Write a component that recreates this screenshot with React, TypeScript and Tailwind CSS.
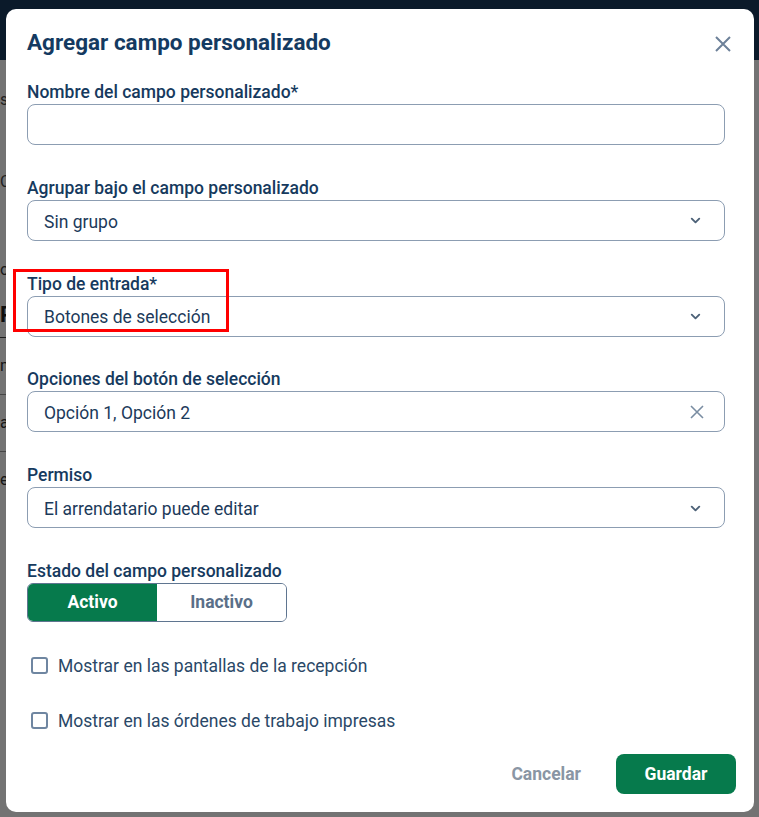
import { ChevronDown } from "lucide-react";

const font = { fontFamily: "Roboto, 'Liberation Sans', sans-serif" };

function Label({ children }: { children: React.ReactNode }) {
  return (
    <div className="h-[23px] text-[17.5px] leading-[23px] font-medium text-[#163a5e]">{children}</div>
  );
}

function SelectBox({ value }: { value: string }) {
  return (
    <div className="flex h-[41px] items-center justify-between rounded-[8px] border border-[#8c9db2] pl-[16px] pr-[21px] text-[17.5px] text-[#1c3a5a]">
      <span className="pt-[3px]">{value}</span>
      <ChevronDown className="mt-[1px] h-[15px] w-[15px] text-[#4d6278]" strokeWidth={3} />
    </div>
  );
}

function Checkbox({ label }: { label: string }) {
  return (
    <label className="flex h-[24px] items-center gap-[10px] pl-[4px] text-[17.5px] text-[#2a4867]">
      <span className="h-[17px] w-[17px] rounded-[3px] border-2 border-[#6f86a1] bg-white" />
      <span>{label}</span>
    </label>
  );
}

export default function App() {
  const letters = [
    { t: "s", cls: "mt-[30px] text-[#4a4a4a]" },
    { t: "C", cls: "mt-[62px] text-[#4a4a4a]" },
    { t: "o", cls: "mt-[68px] text-[#3a3a3a]" },
  ];
  return (
    <div className="relative h-[817px] w-[759px] overflow-hidden bg-white" style={font}>
      {/* page behind the dialog */}
      <div className="h-[60px] bg-[#1a3a5e]" />
      <div className="flex flex-col">
        {letters.map((r, i) => (
          <div key={i} className={`${r.cls} w-[6px] overflow-hidden text-[16px] leading-[20px]`}>
            {r.t}
          </div>
        ))}
        <div className="mt-[18px] w-[6px] overflow-hidden border-b border-[#444] pb-[6px] text-[22px] font-bold text-[#222]">P</div>
        <div className="w-[6px] overflow-hidden border-b border-[#999] py-[16px] text-[16px] text-[#333]">n</div>
        <div className="w-[6px] overflow-hidden border-b border-[#999] py-[16px] text-[16px] text-[#333]">a</div>
        <div className="w-[6px] overflow-hidden py-[16px] text-[16px] text-[#333]">e</div>
      </div>
      <div className="absolute inset-0 bg-black/55" />

      {/* dialog */}
      <div className="absolute left-[6px] top-[9px] flex h-[803px] w-[748px] flex-col rounded-[10px] bg-white pl-[21px] pr-[29px] pt-[19px]">
        <div className="flex h-[30px] items-center justify-between">
          <h2 className="text-[22.5px] font-bold text-[#143a61]">Agregar campo personalizado</h2>
          <button className="-mr-[6px] mt-[1px]">
            <svg width="16" height="16" viewBox="0 0 16 16" stroke="#6d8199" strokeWidth="2" fill="none">
              <path d="M1 1 L15 15 M15 1 L1 15" />
            </svg>
          </button>
        </div>

        <div className="mt-[23px] flex flex-col gap-[31.8px]">
          <div>
            <Label>Nombre del campo personalizado*</Label>
            <div className="h-[41px] rounded-[8px] border border-[#8c9db2]" />
          </div>
          <div>
            <Label>Agrupar bajo el campo personalizado</Label>
            <SelectBox value="Sin grupo" />
          </div>
          <div className="relative">
            <div className="absolute -left-[14px] -top-[4px] h-[63px] w-[216px] border-[3px] border-[#ff0000]" />
            <Label>Tipo de entrada*</Label>
            <SelectBox value="Botones de selección" />
          </div>
          <div>
            <Label>Opciones del botón de selección</Label>
            <div className="flex h-[41px] items-center justify-between rounded-[8px] border border-[#8c9db2] pl-[16px] pr-[20px] text-[17.5px] text-[#1c3a5a]">
              <span className="pt-[3px]">Opción 1, Opción 2</span>
              <svg width="14" height="14" viewBox="0 0 14 14" stroke="#7a8da2" strokeWidth="1.6" fill="none">
                <path d="M1 1 L13 13 M13 1 L1 13" />
              </svg>
            </div>
          </div>
          <div>
            <Label>Permiso</Label>
            <SelectBox value="El arrendatario puede editar" />
          </div>
          <div>
            <Label>Estado del campo personalizado</Label>
            <div className="flex h-[39px] w-[260px] overflow-hidden rounded-[6px] border border-[#5f7590] text-[17.5px] font-bold">
              <div className="flex flex-1 items-center justify-center bg-[#067a4c] text-white">Activo</div>
              <div className="flex flex-1 items-center justify-center bg-white text-[#5a6f88]">Inactivo</div>
            </div>
          </div>
        </div>

        <div className="mt-[32px] flex flex-col gap-[31px]">
          <Checkbox label="Mostrar en las pantallas de la recepción" />
          <Checkbox label="Mostrar en las órdenes de trabajo impresas" />
        </div>

        <div className="-mr-[11px] mt-[21px] flex items-center justify-end gap-[35px]">
          <button className="text-[17.5px] font-bold text-[#8a96a4]">Cancelar</button>
          <button className="h-[40px] w-[120px] rounded-[8px] bg-[#067a4c] text-[17.5px] font-bold text-white">Guardar</button>
        </div>
      </div>
    </div>
  );
}
